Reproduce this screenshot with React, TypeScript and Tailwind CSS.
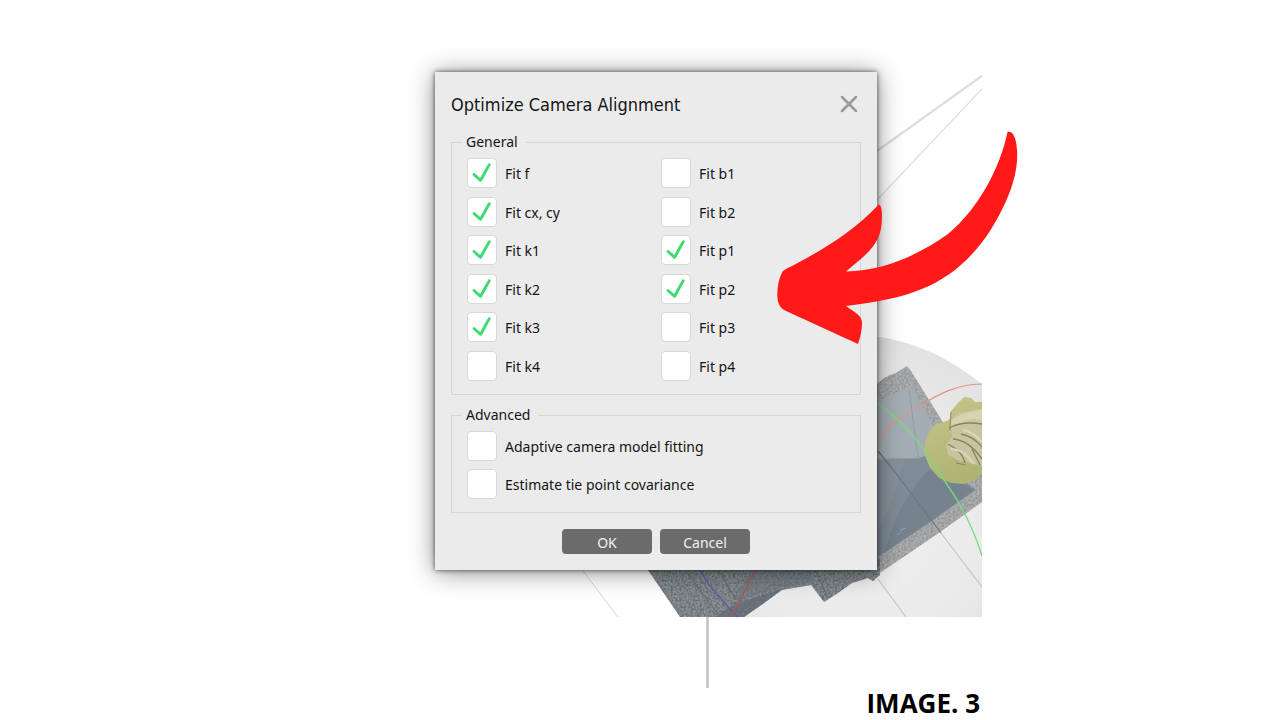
import { useState } from "react";
import { X } from "lucide-react";

interface Option {
  id: string;
  label: string;
  checked: boolean;
}

// Column order: left column first, then right
const generalOptions: Option[] = [
  { id: "f", label: "Fit f", checked: true },
  { id: "cxcy", label: "Fit cx, cy", checked: true },
  { id: "k1", label: "Fit k1", checked: true },
  { id: "k2", label: "Fit k2", checked: true },
  { id: "k3", label: "Fit k3", checked: true },
  { id: "k4", label: "Fit k4", checked: false },
  { id: "b1", label: "Fit b1", checked: false },
  { id: "b2", label: "Fit b2", checked: false },
  { id: "p1", label: "Fit p1", checked: true },
  { id: "p2", label: "Fit p2", checked: true },
  { id: "p3", label: "Fit p3", checked: false },
  { id: "p4", label: "Fit p4", checked: false },
];

const advancedOptions: Option[] = [
  { id: "adaptive", label: "Adaptive camera model fitting", checked: false },
  { id: "covariance", label: "Estimate tie point covariance", checked: false },
];

const CheckOption = ({ option }: { option: Option }) => {
  const [checked, setChecked] = useState(option.checked);

  return (
    <label htmlFor={option.id} className="flex items-center gap-2">
      <span className="relative h-[30px] w-[30px] shrink-0">
        <input
          id={option.id}
          type="checkbox"
          checked={checked}
          onChange={(e) => setChecked(e.target.checked)}
          className="block h-[30px] w-[30px] appearance-none rounded border border-[#d8d8d8] bg-white"
        />
        {checked && (
          <svg viewBox="0 0 30 30" className="pointer-events-none absolute inset-0" fill="none">
            <path
              d="M7 16.5L13.6 22.3C16.5 17.5 19 12 22.3 6.8"
              stroke="#3edb70"
              strokeWidth="2.9"
              strokeLinecap="round"
              strokeLinejoin="round"
            />
          </svg>
        )}
      </span>
      <span className="pt-px">{option.label}</span>
    </label>
  );
};

// 3D viewport behind the dialog
const Scene = () => (
  <svg viewBox="298 0 684 720" className="absolute left-0 top-0 w-full" fill="none" aria-hidden="true">
    <defs>
      <radialGradient id="ball" gradientUnits="userSpaceOnUse" cx="860" cy="520" r="190">
        <stop offset="0" stopColor="#f0f0f0" />
        <stop offset="0.6" stopColor="#ebebeb" />
        <stop offset="1" stopColor="#e1e1e1" />
      </radialGradient>
      <linearGradient id="bush" x1="0" y1="0" x2="0.3" y2="1">
        <stop offset="0" stopColor="#c9c58e" />
        <stop offset="1" stopColor="#aeb472" />
      </linearGradient>
      <filter id="grain" x="0" y="0" width="1" height="1">
        <feTurbulence type="fractalNoise" baseFrequency="0.45" numOctaves="2" seed="4" />
        <feColorMatrix values="1.4 0 0 0 -0.3  1.4 0 0 0 -0.3  1.4 0 0 0 -0.3  0 0 0 0 0.22" />
        <feComposite in2="SourceGraphic" operator="in" result="noise" />
        <feMerge>
          <feMergeNode in="SourceGraphic" />
          <feMergeNode in="noise" />
        </feMerge>
      </filter>
    </defs>

    <path d="M877 151L982 76" stroke="#dddddd" strokeWidth="2.2" />
    <path d="M877 200L982 89" stroke="#dedede" strokeWidth="1.2" />
    <path d="M583 571L618 617" stroke="#d8d8d8" />
    <path d="M860 335C905 337 946 355 982 384V617H730V560H860Z" fill="url(#ball)" />

    {/* right side of the model */}
    <path
      d="M870 390L877 384L884 378L890 375L896 373L907 366L911 371L944 424L982 465V502L940 532L905 556L878 574L873 581L866 577L860 560Z"
      fill="#a0a3a5"
      filter="url(#grain)"
    />
    <path d="M870 406L877 402L908 387L914 390L935 430L976 492L930 522L884 552L870 564Z" fill="#a4adb4" />
    <path d="M870 459L918 458L930 455L976 490L932 521L884 553L870 563Z" fill="#7f8b95" />
    <path d="M885 552C893 521 905 493 932 467L974 490L932 520Z" fill="#76838e" />
    <path d="M870 459H905C897 485 888 515 870 545Z" fill="#85919b" />
    <path d="M870 460L922 458M909 389L918 458" stroke="#929ba1" />
    <path d="M897 535L902 531M900 530L906 528M913 541L916 539" stroke="#98a2aa" />
    <path d="M878 451L895 472L941 533" stroke="#697580" strokeWidth="1.2" />
    <path d="M941 533L982 587M878 579L906 617" stroke="#c3c3c3" strokeWidth="1.2" />

    {/* lower edge of the model */}
    <path
      d="M640 558H880V575L873 581L868 578L852 583L838 593L824 602L811 585L782 590L764 603L744 617H680L648 570Z"
      fill="#6c757c"
      filter="url(#grain)"
    />
    <path d="M752 570L812 571L810 583L780 588L740 600L732 600Z" fill="#6d7880" opacity="0.5" />
    <path d="M715 617L735 604L784 588L764 603L744 617Z" fill="#5e6970" opacity="0.7" />
    <path d="M685 570L718 614M718 570L736 600M815 570L828 598" stroke="#5f686f" />
    <path d="M700 570C709 587 723 602 738 617" stroke="#5759ad" strokeWidth="1.3" />
    <path d="M755 571C746 588 740 601 730 617" stroke="#b35559" strokeWidth="1.3" />
    <path d="M707.5 617V688" stroke="#c5c5c5" strokeWidth="2.6" />

    {/* bush */}
    <path
      d="M944 422L950 419L951 411L958 403L964 397L971 398L975 402L982 402V474L975 480L964 484L951 483L939 478L930 468L924 453L925 443L929 432L935 424Z"
      fill="url(#bush)"
    />
    <path d="M950 420L958 413L973 410L982 409V466L974 464L960 461L948 455L946 445L952 436Z" fill="#c9c3a0" />
    <path d="M950 421C963 411 972 413 982 409L982 421C971 416 961 422 951 429Z" fill="#d8d2b0" />
    <path
      d="M949 428C960 422 970 422 982 424M948 444C957 449 963 454 965 463M953 439C966 440 975 449 982 459M961 434C971 436 978 442 982 447M972 449L980 465"
      stroke="#8b8361"
      strokeWidth="1.4"
    />
    <path
      d="M951 449C963 450 969 457 974 464M963 430C972 432 977 436 982 442"
      stroke="#ddd7ba"
      strokeWidth="2"
    />
    <path d="M951 412L950 430M956 463L966 465" stroke="#8f8a58" />

    <path d="M877 438C888 429 899 417 915 409C938 394 957 384 982 384" stroke="#e58d8d" strokeWidth="1.2" />
    <path d="M877 403C910 425 930 458 944 480C962 505 974 530 982 556" stroke="#79dc7c" strokeWidth="1.3" />
  </svg>
);

const Arrow = () => (
  <svg
    viewBox="298 0 684 720"
    className="pointer-events-none absolute left-0 top-0 w-full overflow-visible"
    aria-hidden="true"
  >
    <path
      d="M1007.5 132C1014 130 1017 141 1017.2 154C1017.5 180 1005 207 990 231C973 257 951 277 923 288.500C901 298 876 302 846 306C854 312 862 315 862 323C862 331 860 338 858 344L785 310.5C779 308 777.3 301 777.3 295C777.3 286 779 278 782.5 271.5C785 269 790 267 794 265C826 248 855 230 878.5 204.7C881 204 882 210 882 216C882 242 872 250 846 271.5C884 271 920 254 948 234C979 208 1000 168 1007.5 132Z"
      fill="#ff1919"
    />
  </svg>
);

const OptimizeDialog = () => (
  <div
    role="dialog"
    aria-labelledby="dialog-title"
    className="relative w-[442px] max-w-full bg-[#ebebeb] p-4 text-[14px] text-[#151515] shadow-[0_0_5px_rgba(0,0,0,0.65),0_2px_24px_rgba(0,0,0,0.45)]"
  >
    <div className="mb-3 flex h-8 items-center justify-between">
      <h1 id="dialog-title" className="font-['DejaVu_Sans_Condensed','Noto_Sans',sans-serif] text-[18px]">
        Optimize Camera Alignment
      </h1>
      <button type="button" aria-label="Close" className="-mr-0.5 text-[#9b9b9b]">
        <X size={28} strokeWidth={2.2} />
      </button>
    </div>

    <fieldset className="border border-[#d6d6d6] px-[15px] pt-1.5 pb-[13px]">
      <legend className="-ml-[5px] px-1 pr-2 leading-5">General</legend>
      <div className="grid h-[223px] grid-flow-col grid-cols-[194px_1fr] grid-rows-[repeat(6,30px)] content-between">
        {generalOptions.map((option) => (
          <CheckOption key={option.id} option={option} />
        ))}
      </div>
    </fieldset>

    <fieldset className="mt-2.5 border border-[#d6d6d6] px-[15px] pt-1.5 pb-[13px]">
      <legend className="-ml-[5px] px-1 pr-2 leading-5">Advanced</legend>
      <div className="flex flex-col gap-2">
        {advancedOptions.map((option) => (
          <CheckOption key={option.id} option={option} />
        ))}
      </div>
    </fieldset>

    <div className="mt-4 flex justify-center gap-2 text-[#f2f2f2]">
      <button type="button" className="h-[25px] w-[90px] rounded-sm bg-[#6b6b6b] pt-0.5">
        OK
      </button>
      <button type="button" className="h-[25px] w-[90px] rounded-sm bg-[#6b6b6b] pt-0.5">
        Cancel
      </button>
    </div>
  </div>
);

const App = () => {
  return (
    <main className="min-h-screen overflow-x-hidden bg-white font-['Noto_Sans','DejaVu_Sans_Condensed',sans-serif]">
      <figure className="relative mx-auto flex min-h-screen max-w-[684px] flex-col pt-[72px]">
        <Scene />
        <div className="flex justify-center pl-8">
          <OptimizeDialog />
        </div>
        <Arrow />
        <figcaption className="relative mt-auto pr-0.5 text-right font-['Open_Sans',sans-serif] text-[26px] leading-[34px] font-bold text-black">
          IMAGE. 3
        </figcaption>
      </figure>
    </main>
  );
};

export default App;
